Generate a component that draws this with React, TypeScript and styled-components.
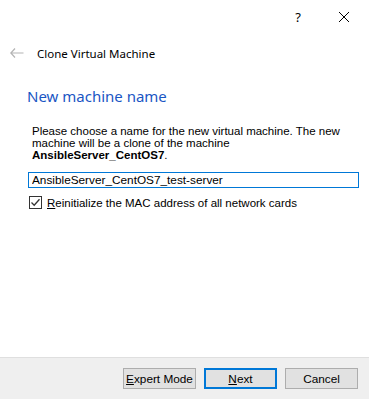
import React from "react";
import styled, { createGlobalStyle } from "styled-components";

const GlobalStyle = createGlobalStyle`
  html, body {
    margin: 0;
    padding: 0;
    background: #ffffff;
  }
  * {
    box-sizing: border-box;
  }
`;

const App: React.FC = () => {
  return (
    <>
      <GlobalStyle />
      <Window>
        <TitleBar>
          <TitleButton>?</TitleButton>
          <TitleButton>
            <svg width="12" height="12" viewBox="0 0 12 12">
              <path d="M1 1 L11 11 M11 1 L1 11" stroke="#000" strokeWidth="1" />
            </svg>
          </TitleButton>
        </TitleBar>
        <NavRow>
          <BackArrow>
            <svg width="14" height="10" viewBox="0 0 14 10">
              <path d="M5 0.5 L0.8 5 L5 9.5 M0.8 5 H13.5" stroke="#b4b4b4" strokeWidth="1.2" fill="none" />
            </svg>
          </BackArrow>
          <NavTitle>Clone Virtual Machine</NavTitle>
        </NavRow>
        <Content>
          <Heading>New machine name</Heading>
          <Description>
            Please choose a name for the new virtual machine. The new machine will be a clone of the machine{" "}
            <b>AnsibleServer_CentOS7</b>.
          </Description>
          <NameInput defaultValue="AnsibleServer_CentOS7_test-server" />
          <CheckRow>
            <CheckBox>
              <svg width="11" height="11" viewBox="0 0 11 11">
                <path d="M1.5 5.5 L4.2 8.2 L9.5 2.2" stroke="#333" strokeWidth="1.3" fill="none" />
              </svg>
            </CheckBox>
            <CheckLabel>
              <u>R</u>einitialize the MAC address of all network cards
            </CheckLabel>
          </CheckRow>
        </Content>
        <Footer>
          <Button>
            <u>E</u>xpert Mode
          </Button>
          <Button primary>
            <u>N</u>ext
          </Button>
          <Button>Cancel</Button>
        </Footer>
      </Window>
    </>
  );
};

export default App;

const Window = styled.div`
  width: 369px;
  height: 399px;
  display: flex;
  flex-direction: column;
  background: #ffffff;
  font-family: "Liberation Sans", Arial, sans-serif;
  color: #000;
`;

const TitleBar = styled.div`
  height: 33px;
  display: flex;
  justify-content: flex-end;
  align-items: center;
  padding-right: 2px;
`;

const TitleButton = styled.div`
  width: 46px;
  height: 33px;
  display: flex;
  align-items: center;
  justify-content: center;
  font-family: "Noto Sans", sans-serif;
  font-size: 13px;
`;

const NavRow = styled.div`
  height: 42px;
  display: flex;
  align-items: center;
  padding-left: 10px;
  padding-bottom: 2px;
`;

const BackArrow = styled.div`
  width: 27px;
  display: flex;
  align-items: center;
`;

const NavTitle = styled.div`
  font-family: "Noto Sans", "Open Sans", sans-serif;
  font-size: 11.5px;
  color: #000;
`;

const Content = styled.div`
  flex: 1;
  display: flex;
  flex-direction: column;
  padding: 0 11px 0 28px;
`;

const Heading = styled.div`
  font-family: "Noto Sans", "Open Sans", sans-serif;
  font-size: 15px;
  color: #1a56c4;
  margin-top: 11px;
  margin-left: -1px;
  line-height: 20px;
`;

const Description = styled.div`
  font-size: 11.5px;
  line-height: 12px;
  margin: 19px 0 0 4px;

  b {
    font-weight: bold;
  }
`;

const NameInput = styled.input`
  margin-top: 11px;
  width: 331px;
  height: 16px;
  border: 1px solid #0078d7;
  padding: 0 0 0 3px;
  font-family: "Liberation Sans", Arial, sans-serif;
  font-size: 11.8px;
  color: #000;
  outline: none;
`;

const CheckRow = styled.div`
  margin-top: 8px;
  display: flex;
  align-items: center;
  gap: 5px;
  padding-left: 1px;
`;

const CheckBox = styled.div`
  width: 13px;
  height: 13px;
  border: 1px solid #333;
  display: flex;
  align-items: center;
  justify-content: center;
  background: #fff;
`;

const CheckLabel = styled.span`
  font-size: 11.5px;
`;

const Footer = styled.div`
  height: 42px;
  background: #efefef;
  border-top: 1px solid #dfdfdf;
  display: flex;
  align-items: center;
  justify-content: flex-end;
  gap: 8px;
  padding: 0 11px 0 0;
`;

const Button = styled.button<{ primary?: boolean }>`
  width: 73px;
  height: 21px;
  background: #e1e1e1;
  border: ${({ primary }) => (primary ? "2px solid #0078d7" : "1px solid #adadad")};
  font-family: "Liberation Sans", Arial, sans-serif;
  font-size: 11.8px;
  color: #000;
  padding: 0;
  display: flex;
  align-items: center;
  justify-content: center;
`;
